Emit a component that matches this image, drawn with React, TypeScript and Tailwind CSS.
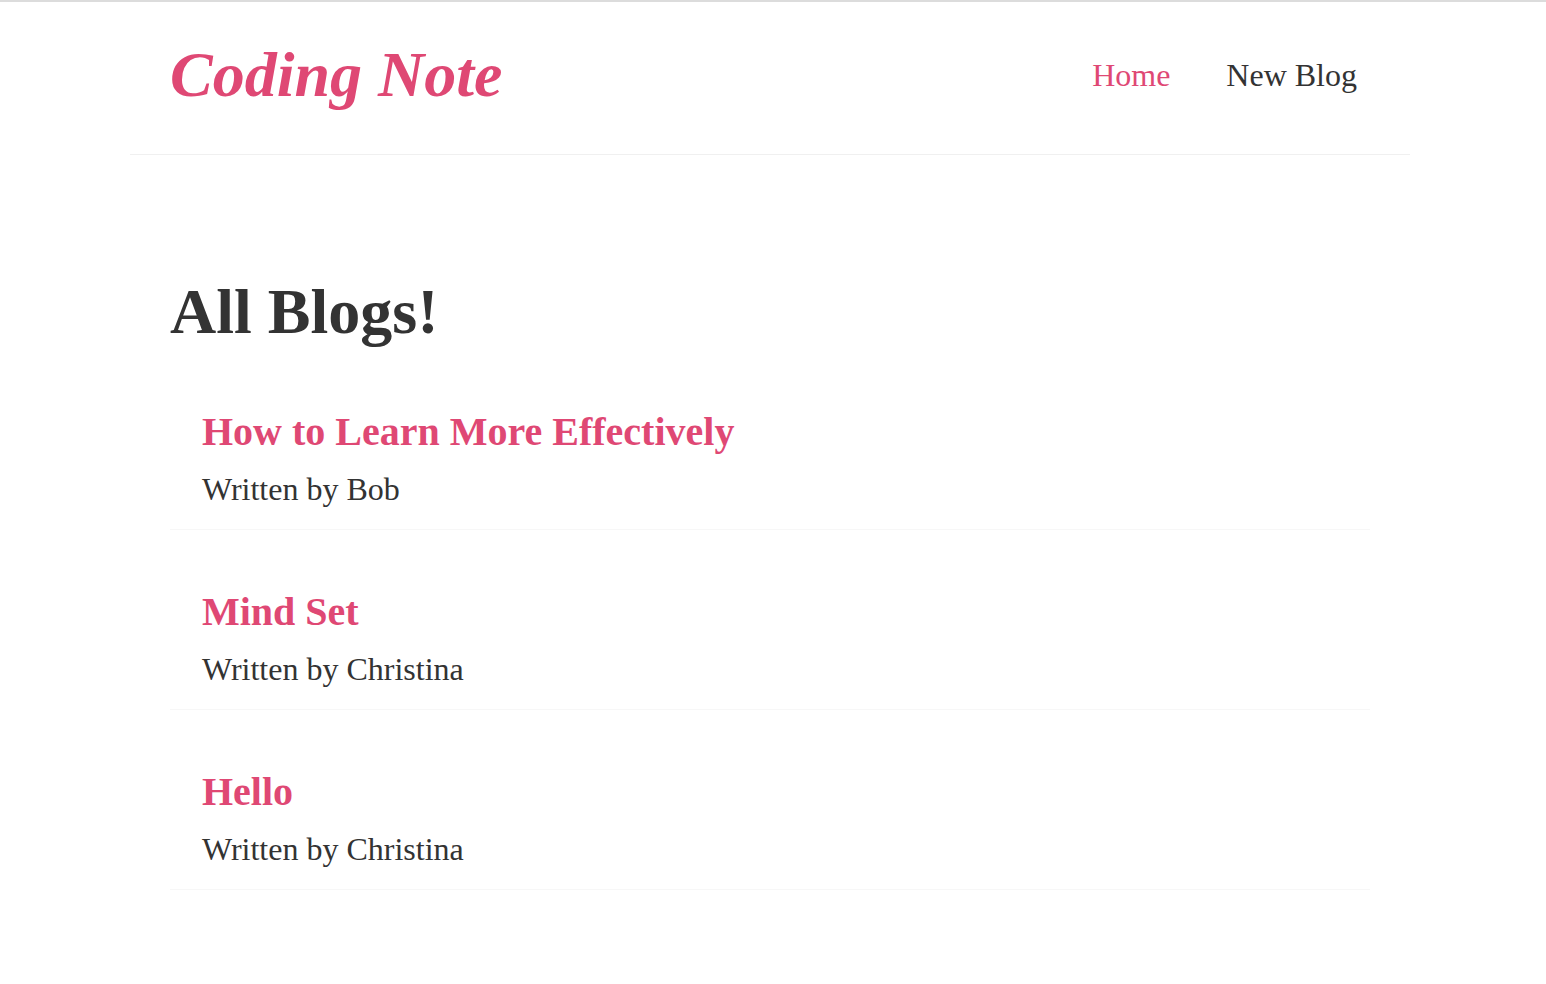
const blogs = [
  { id: 1, title: "How to Learn More Effectively", author: "Bob" },
  { id: 2, title: "Mind Set", author: "Christina" },
  { id: 3, title: "Hello", author: "Christina" },
];

const App = () => {
  return (
    <div
      className="min-h-screen bg-white border-t-2 border-[#dcdcdc] text-[#333] pr-[6px]"
      style={{ fontFamily: '"Liberation Serif", "Times New Roman", serif' }}
    >
      {/* Navbar */}
      <nav className="w-[1280px] mx-auto px-10 pt-[31px] pb-[37px] flex items-center border-b border-[#f0f0f0]">
        <h1 className="text-[64px] leading-[84px] font-bold italic text-[#df4874]">Coding Note</h1>
        <div className="ml-auto flex items-center gap-14 pr-[13px]">
          <a href="/" className="text-[32px] leading-[40px] text-[#df4874]">Home</a>
          <a href="/create" className="text-[32px] leading-[40px]">New Blog</a>
        </div>
      </nav>

      {/* Content */}
      <div className="w-[1200px] mx-auto pt-[119px]">
        <h2 className="text-[64px] leading-[76px] font-bold">All Blogs!</h2>
        <div className="flex flex-col">
          {blogs.map((blog) => (
            <div key={blog.id} className="pl-8 pt-[58px] pb-5 border-b border-[#f7f7f7]">
              <h2 className="text-[40px] leading-[48px] font-bold text-[#df4874]">{blog.title}</h2>
              <p className="mt-[13px] text-[32px] leading-[40px]">Written by {blog.author}</p>
            </div>
          ))}
        </div>
      </div>
    </div>
  );
};

export default App;
